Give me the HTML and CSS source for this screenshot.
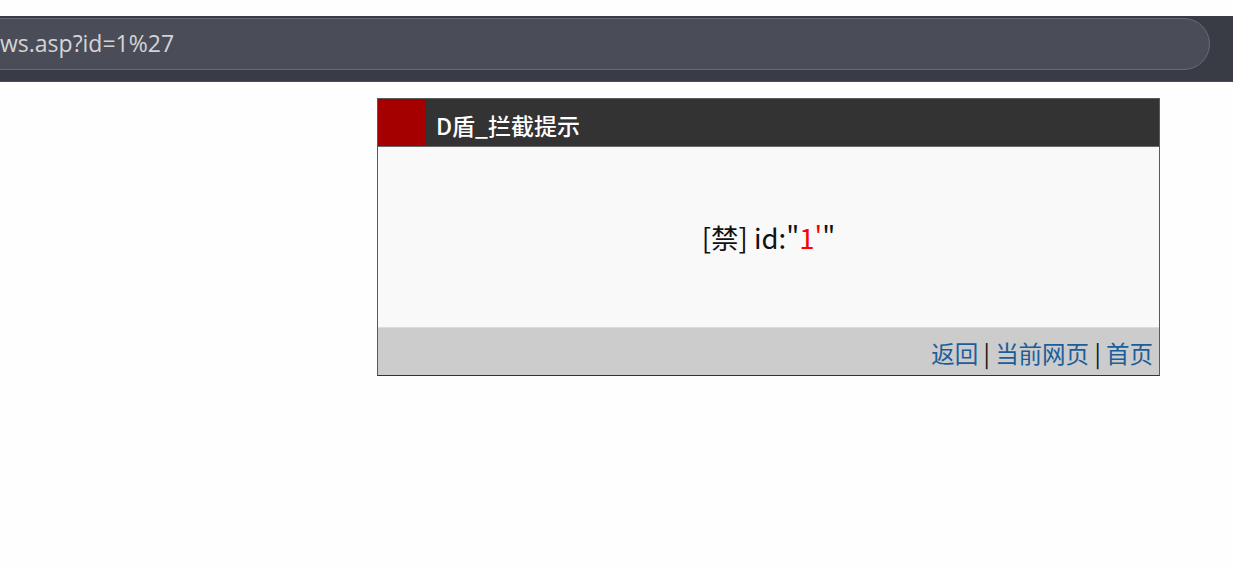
FILE: index.html
```html
<!DOCTYPE html>
<html lang="zh-CN">
<head>
<meta charset="utf-8">
<title>D盾_拦截提示</title>
<link rel="stylesheet" href="styles.css">
</head>
<body>
<div class="chrome">
  <div class="field"><span class="url">ws.asp?id=1%27</span></div>
</div>
<div class="dbox">
  <div class="dhead">
    <div class="dmark"></div>
    <div class="dtitle">D盾_拦截提示</div>
  </div>
  <div class="dbody">
    <div class="dmsg">[禁] id:"<span class="hl">1'</span>"</div>
  </div>
  <div class="dfoot">
    <a class="lnk" href="#">返回</a> | <a class="lnk" href="#">当前网页</a> | <a class="lnk" href="#">首页</a>
  </div>
</div>
</body>
</html>
```
FILE: styles.css
```css
html, body {
  margin: 0;
  padding: 0;
  background: #fefefe;
}
body {
  font-family: "Noto Sans CJK SC", "Noto Sans", sans-serif;
  overflow: hidden;
}
.chrome {
  margin-top: 16px;
  height: 66px;
  background: #3a3c45;
  border-bottom: 1px solid #4a4c54;
  padding-top: 2px;
  box-sizing: border-box;
}
.field {
  margin-left: -60px;
  width: 1270px;
  height: 52px;
  box-sizing: border-box;
  background: #4a4d57;
  border: 1px solid #696b73;
  border-radius: 0 26px 26px 0;
  display: flex;
  align-items: center;
  padding-left: 59px;
}
.url {
  font-family: "Open Sans", "Noto Sans", sans-serif;
  font-size: 23px;
  color: #d4d4d6;
  position: relative;
  top: -1px;
}
.dbox {
  margin: 16px 0 0 377px;
  width: 783px;
  box-sizing: border-box;
  border: 1px solid #5a5a5a;
  border-bottom-color: #333;
}
.dhead {
  display: flex;
  height: 48px;
  background: #333333;
  border-bottom: 1px solid #6a6a6a;
  box-sizing: border-box;
}
.dmark {
  width: 48px;
  background: #a50000;
}
.dtitle {
  color: #ffffff;
  font-size: 23px;
  font-weight: 500;
  line-height: 52px;
  padding-left: 10px;
}
.dbody {
  height: 181px;
  background: #f9f9f9;
  display: flex;
  align-items: center;
  justify-content: center;
  border-bottom: 1px solid #dcdcdc;
  box-sizing: border-box;
}
.dmsg {
  font-size: 27.5px;
  color: #111;
}
.hl {
  color: #ff0000;
}
.dfoot {
  height: 47px;
  background: #cccccc;
  text-align: right;
  padding-right: 6px;
  font-size: 23.5px;
  line-height: 50px;
  color: #111;
}
.lnk {
  color: #1b5e9a;
  text-decoration: none;
}
```
